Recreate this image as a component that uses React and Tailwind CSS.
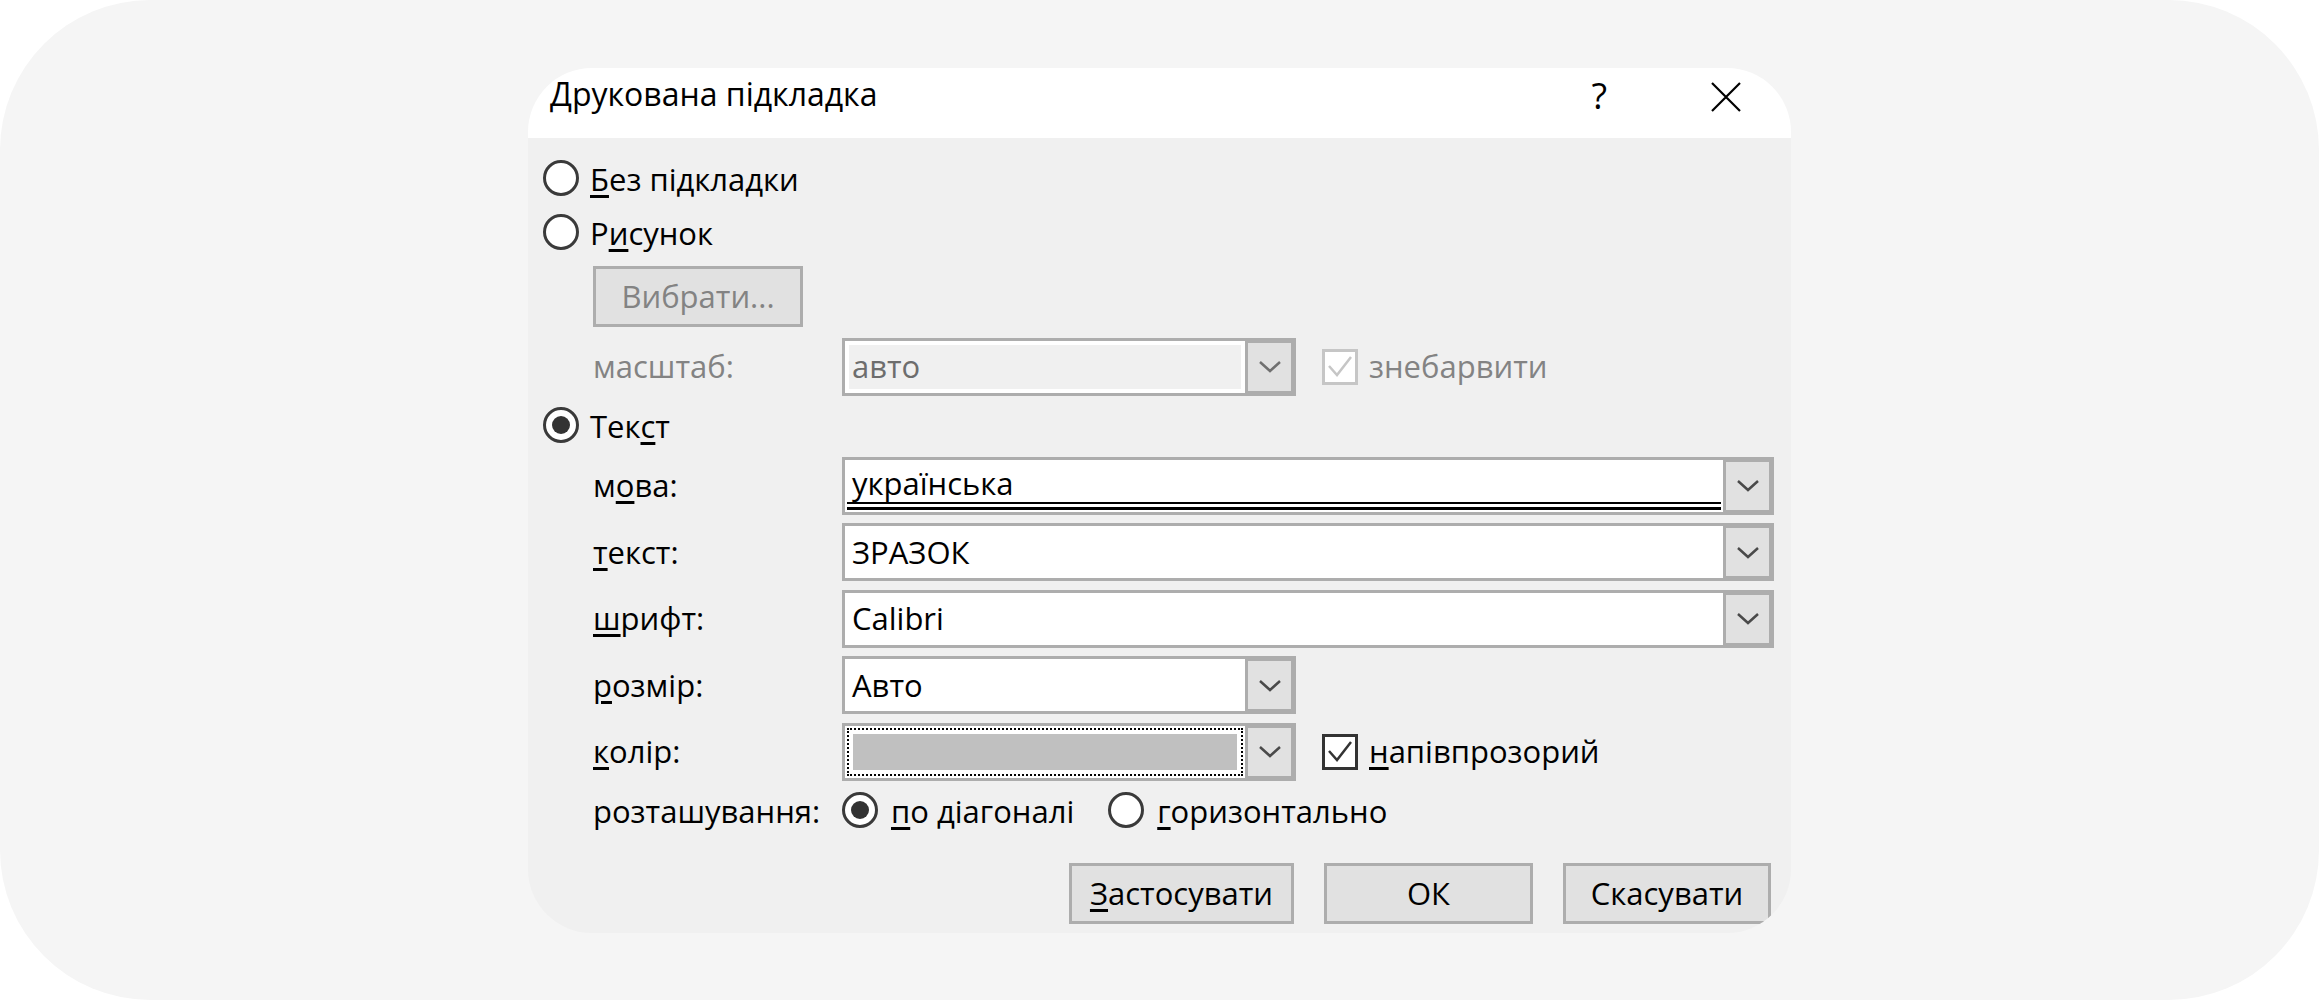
import React from 'react';

const font = { fontFamily: '"Open Sans", "Noto Sans", sans-serif' };

function Chevron({ muted }) {
  return (
    <svg width="24" height="13" viewBox="0 0 24 13" fill="none">
      <path d="M2 2 L12 11 L22 2" stroke={muted ? '#707070' : '#4a4a4a'} strokeWidth="2.5" />
    </svg>
  );
}

function Check({ color }) {
  return (
    <svg width="30" height="30" viewBox="0 0 30 30" fill="none">
      <path d="M4 14 L12 23 L26 5" stroke={color} strokeWidth="2.5" />
    </svg>
  );
}

function Radio({ checked }) {
  return (
    <div className="flex h-[36px] w-[36px] shrink-0 items-center justify-center rounded-full border-[3px] border-[#3a3a3a] bg-white">
      {checked && <div className="h-[18px] w-[18px] rounded-full bg-[#333]" />}
    </div>
  );
}

function Key({ children }) {
  return <span className="underline decoration-3 underline-offset-4">{children}</span>;
}

function DropButton({ muted }) {
  return (
    <div className="flex w-[48px] shrink-0 bg-[#adadad] pt-[2px] pr-[2px] pb-[2px] pl-[3px]">
      <div className="flex flex-1 items-center justify-center bg-[#e1e1e1]">
        <Chevron muted={muted} />
      </div>
    </div>
  );
}

function Combo({ wide, children }) {
  return (
    <div className={`flex h-[58px] border-[3px] border-[#adadad] ${wide ? 'w-[932px]' : 'w-[454px]'}`}>
      <div className="flex flex-1 items-center bg-white pl-[7px] text-black">{children}</div>
      <DropButton />
    </div>
  );
}

function Row({ label, children }) {
  return (
    <div className="flex items-center">
      <div className="w-[249px] shrink-0">{label}</div>
      {children}
    </div>
  );
}

function WinButton({ children, width, muted }) {
  return (
    <div
      className={`flex h-[61px] items-center justify-center border-[3px] border-[#adadad] bg-[#e1e1e1] ${width} ${
        muted ? 'text-[#838383]' : 'text-black'
      }`}
    >
      {children}
    </div>
  );
}

export default function App() {
  return (
    <div className="h-[1000px] w-full bg-white" style={font}>
      <div className="flex h-[1000px] w-full items-center justify-center rounded-[150px] bg-[#f5f5f5]">
        <div className="flex h-[865px] w-[1263px] flex-col overflow-hidden rounded-[64px] text-[31px] leading-none text-black">
          {/* title bar */}
          <div className="flex h-[70px] shrink-0 items-start bg-white pt-[10px] pl-[22px]">
            <span className="text-[32px]">Друкована підкладка</span>
            <span className="ml-auto text-[36px] leading-none">?</span>
            <div className="mt-[4px] mr-[50px] ml-[104px]">
              <svg width="30" height="30" viewBox="0 0 30 30" fill="none">
                <path d="M1 1 L29 29 M29 1 L1 29" stroke="#000" strokeWidth="2.2" />
              </svg>
            </div>
          </div>

          {/* body */}
          <div className="flex flex-1 flex-col bg-[#f0f0f0] pt-[22px] pr-[17px] pl-[15px]">
            <div className="flex items-center gap-[11px]">
              <Radio />
              <span className="pt-[4px]">
                <Key>Б</Key>ез підкладки
              </span>
            </div>
            <div className="mt-[18px] flex items-center gap-[11px]">
              <Radio />
              <span className="pt-[4px]">
                Р<Key>и</Key>сунок
              </span>
            </div>

            <div className="mt-[16px] ml-[50px]">
              <WinButton width="w-[210px]" muted>
                Вибрати...
              </WinButton>
            </div>

            <div className="mt-[11px] ml-[50px] flex items-center">
              <div className="w-[249px] shrink-0 text-[#838383]">масштаб:</div>
              <div className="flex h-[58px] w-[454px] border-[3px] border-[#adadad]">
                <div className="flex flex-1 items-center border-[4px] border-white bg-[#f0f0f0] pl-[3px] text-[#6d6d6d]">
                  авто
                </div>
                <DropButton muted />
              </div>
              <div className="ml-[26px] flex h-[36px] w-[36px] items-center justify-center border-[3px] border-[#c6c6c6] bg-white">
                <Check color="#c6c6c6" />
              </div>
              <span className="ml-[11px] text-[#838383]">знебарвити</span>
            </div>

            <div className="mt-[11px] flex items-center gap-[11px]">
              <Radio checked />
              <span className="pt-[4px]">
                Тек<Key>с</Key>т
              </span>
            </div>

            <div className="mt-[14px] ml-[50px] flex flex-col gap-[8.5px]">
              <Row
                label={
                  <span>
                    м<Key>о</Key>ва:
                  </span>
                }
              >
                <div className="flex h-[58px] w-[932px] border-[3px] border-[#adadad]">
                  <div className="flex flex-1 flex-col bg-white">
                    <div className="flex flex-1 items-center pt-[6px] pl-[7px]">українська</div>
                    <div className="mr-[2px] mb-[2px] ml-[2px] h-[8px] border-t-2 border-b-[3px] border-black" />
                  </div>
                  <DropButton />
                </div>
              </Row>
              <Row
                label={
                  <span>
                    <Key>т</Key>екст:
                  </span>
                }
              >
                <Combo wide>ЗРАЗОК</Combo>
              </Row>
              <Row
                label={
                  <span>
                    <Key>ш</Key>рифт:
                  </span>
                }
              >
                <Combo wide>Calibri</Combo>
              </Row>
              <Row
                label={
                  <span>
                    <Key>р</Key>озмір:
                  </span>
                }
              >
                <Combo>Авто</Combo>
              </Row>
              <Row
                label={
                  <span>
                    <Key>к</Key>олір:
                  </span>
                }
              >
                <div className="flex h-[58px] w-[454px] border-[3px] border-[#adadad]">
                  <div className="flex flex-1 bg-white p-[2px]">
                    <div className="flex flex-1 border-2 border-dotted border-black p-[4px]">
                      <div className="flex-1 bg-[#c0c0c0]" />
                    </div>
                  </div>
                  <DropButton />
                </div>
                <div className="ml-[26px] flex h-[36px] w-[36px] items-center justify-center border-[3px] border-[#333] bg-white">
                  <Check color="#333" />
                </div>
                <span className="ml-[11px]">
                  <Key>н</Key>апівпрозорий
                </span>
              </Row>
            </div>

            <div className="mt-[11px] ml-[50px] flex items-center">
              <div className="w-[249px] shrink-0 pt-[3px]">розташування:</div>
              <Radio checked />
              <span className="ml-[13px] pt-[3px]">
                <Key>п</Key>о діагоналі
              </span>
              <div className="ml-[34px]">
                <Radio />
              </div>
              <span className="ml-[13px] pt-[3px]">
                <Key>г</Key>оризонтально
              </span>
            </div>

            <div className="mt-[35px] flex justify-end gap-[30px] pr-[3px]">
              <WinButton width="w-[225px]">
                <span>
                  <Key>З</Key>астосувати
                </span>
              </WinButton>
              <WinButton width="w-[209px]">ОК</WinButton>
              <WinButton width="w-[208px]">Скасувати</WinButton>
            </div>
          </div>
        </div>
      </div>
    </div>
  );
}
